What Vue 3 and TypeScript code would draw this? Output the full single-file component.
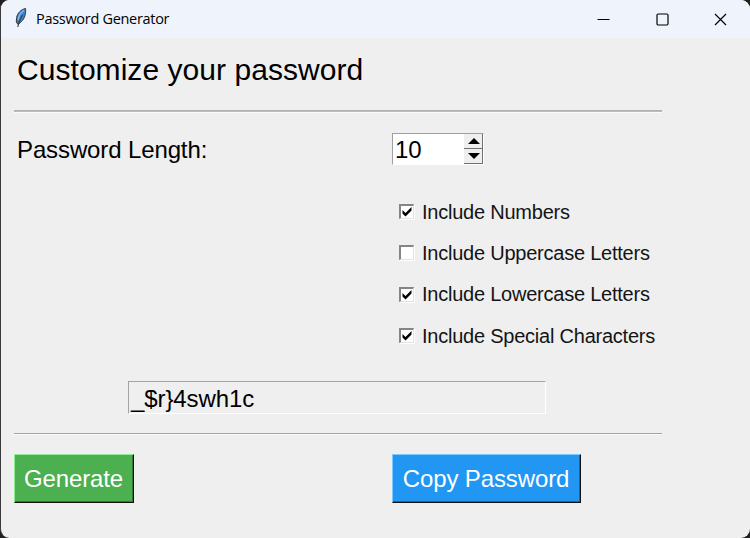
<script setup lang="ts">
import { ref } from 'vue'

interface Option {
  label: string
  checked: boolean
}

const length = ref<number>(10)
const password = ref<string>('_$r}4swh1c')
const options = ref<Option[]>([
  { label: 'Include Numbers', checked: true },
  { label: 'Include Uppercase Letters', checked: false },
  { label: 'Include Lowercase Letters', checked: true },
  { label: 'Include Special Characters', checked: true },
])

function step(delta: number): void {
  length.value = Math.max(1, length.value + delta)
}

function generate(): void {
  const sets = ['0123456789', 'ABCDEFGHIJKLMNOPQRSTUVWXYZ', 'abcdefghijklmnopqrstuvwxyz', '!@#$%^&*_{}']
  const pool = sets.filter((_, i) => options.value[i].checked).join('')
  if (!pool) return
  password.value = Array.from({ length: length.value }, () => pool[Math.floor(Math.random() * pool.length)]).join('')
}

function copy(): void {
  navigator.clipboard?.writeText(password.value)
}
</script>

<template>
  <div class="window">
    <header class="titlebar">
      <svg class="feather" width="16" height="22" viewBox="0 0 16 22">
        <path d="M12.500 1.500C8 2.500 4.500 6 3.600 10.500L3.300 15L5 17.500L8.500 14.500C11.500 11.500 13.200 7 12.500 1.500Z" fill="#3f82cc" stroke="#333a44" stroke-width="1" />
        <path d="M11 3.500C7.500 5.500 5.800 9 5.200 13" fill="none" stroke="#8fbde8" stroke-width="1.300" />
        <path d="M9.500 8C7.500 11 5.500 15 4.800 20" fill="none" stroke="#3a3a3a" stroke-width="1.100" />
      </svg>
      <span class="caption">Password Generator</span>
      <div class="controls">
        <svg width="13" height="13" viewBox="0 0 13 13"><path d="M0.500 6.500H12.500" /></svg>
        <svg width="13" height="13" viewBox="0 0 13 13"><rect x="1" y="1" width="11" height="11" rx="1.200" /></svg>
        <svg width="13" height="13" viewBox="0 0 13 13"><path d="M1 1L12 12M12 1L1 12" /></svg>
      </div>
    </header>

    <main class="body">
      <h1 class="heading">Customize your password</h1>
      <div class="rule top"></div>

      <div class="length-row">
        <span class="length-label">Password Length:</span>
        <div class="spinbox">
          <span class="value">{{ length }}</span>
          <div class="steps">
            <div class="step" @click="step(1)">
              <svg width="12" height="6" viewBox="0 0 12 6"><path d="M6 0L12 6H0Z" /></svg>
            </div>
            <div class="step" @click="step(-1)">
              <svg width="12" height="6" viewBox="0 0 12 6"><path d="M0 0H12L6 6Z" /></svg>
            </div>
          </div>
        </div>
      </div>

      <div class="options">
        <div v-for="o in options" :key="o.label" class="option" @click="o.checked = !o.checked">
          <span class="box">
            <svg v-if="o.checked" width="10" height="10" viewBox="0 0 10 10"><path d="M0.500 3L3.500 6L9.500 0V3.500L3.500 9.500L0.500 6.500Z" /></svg>
          </span>
          <span class="option-label">{{ o.label }}</span>
        </div>
      </div>

      <div class="entry">{{ password }}</div>
      <div class="rule"></div>

      <div class="actions">
        <button class="btn generate" @click="generate">Generate</button>
        <button class="btn copy" @click="copy">Copy Password</button>
      </div>
    </main>
  </div>
</template>

<style>
body {
  background: #202020;
}
</style>

<style scoped>
.window {
  box-sizing: border-box;
  width: 750px;
  height: 538px;
  border-left: 1px solid #3a3a3c;
  border-radius: 9px;
  overflow: hidden;
  background: #efefef;
  color: #000;
  font-family: "Liberation Sans", Arial, sans-serif;
}
.titlebar {
  display: flex;
  align-items: center;
  height: 38px;
  background: #eff3fb;
  padding-left: 12px;
}
.feather {
  margin-top: -2px;
}
.caption {
  margin-left: 7px;
  font-family: "Open Sans", "Noto Sans", sans-serif;
  font-size: 14.500px;
  line-height: 20px;
  letter-spacing: -0.300px;
}
.controls {
  display: flex;
  gap: 45.500px;
  margin-left: auto;
  padding-right: 23px;
}
.controls svg {
  fill: none;
  stroke: #000;
  stroke-width: 1.200;
}
.body {
  padding-left: 13px;
}
.heading {
  margin: 0;
  padding: 14px 0 0 3px;
  height: 58px;
  font-size: 30px;
  font-weight: 400;
  line-height: 36px;
  letter-spacing: 0.050px;
}
.rule {
  width: 648px;
  height: 1px;
  background: #a3a3a3;
  border-bottom: 1px solid #fafafa;
}
.rule.top {
  background: #b0b0b0;
  border-bottom-color: #bcbcbc;
  box-shadow: 0 1px #fafafa;
}
.length-row {
  display: flex;
  margin-top: 21px;
  height: 32px;
}
.length-label {
  width: 375px;
  padding-left: 3px;
  font-size: 24px;
  line-height: 34px;
  letter-spacing: -0.120px;
}
.spinbox {
  box-sizing: border-box;
  display: flex;
  width: 92px;
  height: 32px;
  border: 1px solid #a0a0a0;
  border-right-color: #fff;
  border-bottom-color: #fff;
  background: #fff;
}
.value {
  flex: 1;
  padding-left: 2px;
  font-size: 24px;
  line-height: 32px;
}
.steps {
  width: 19px;
}
.step {
  box-sizing: border-box;
  display: flex;
  align-items: center;
  justify-content: center;
  height: 15px;
  border-right: 1px solid #707070;
  border-bottom: 1px solid #707070;
  background: #efefef;
}
.step svg {
  margin-left: 1px;
}
.options {
  margin: 26px 0 0 385px;
}
.option {
  display: flex;
  align-items: center;
  height: 41.300px;
}
.box {
  box-sizing: border-box;
  display: flex;
  align-items: center;
  justify-content: center;
  width: 15px;
  height: 15px;
  border: 2px solid #858585;
  border-right: 1px solid #e2e2e2;
  border-bottom: 1px solid #e2e2e2;
  background: #fff;
  box-shadow: 1px 1px #fff;
}
.option-label {
  margin-left: 8px;
  font-size: 20px;
  line-height: 24px;
  letter-spacing: -0.230px;
  color: #141414;
}
.entry {
  box-sizing: border-box;
  width: 418px;
  height: 33px;
  margin: 25px 0 19px 114px;
  padding-left: 2px;
  border: 1px solid #a3a3a3;
  border-right-color: #fff;
  border-bottom-color: #fff;
  font-size: 24px;
  line-height: 33px;
  letter-spacing: -0.100px;
}
.actions {
  display: grid;
  grid-template-columns: 378px auto;
  justify-items: start;
  margin-top: 19px;
}
.btn {
  box-sizing: border-box;
  height: 49px;
  padding: 0 1px 0 0;
  border: 1px solid #111;
  border-radius: 0;
  color: #fff;
  font: 24px/46px "Liberation Sans", Arial, sans-serif;
  letter-spacing: -0.120px;
  white-space: nowrap;
}
.generate {
  width: 120px;
  background: #4caf50;
  border-top-color: #90ee90;
  border-left-color: #90ee90;
  box-shadow: inset -1px -1px #2f7a32;
}
.copy {
  width: 189px;
  background: #2196f3;
  border-top-color: #7cc8ff;
  border-left-color: #7cc8ff;
  box-shadow: inset -1px -1px #1565a8;
}
</style>
